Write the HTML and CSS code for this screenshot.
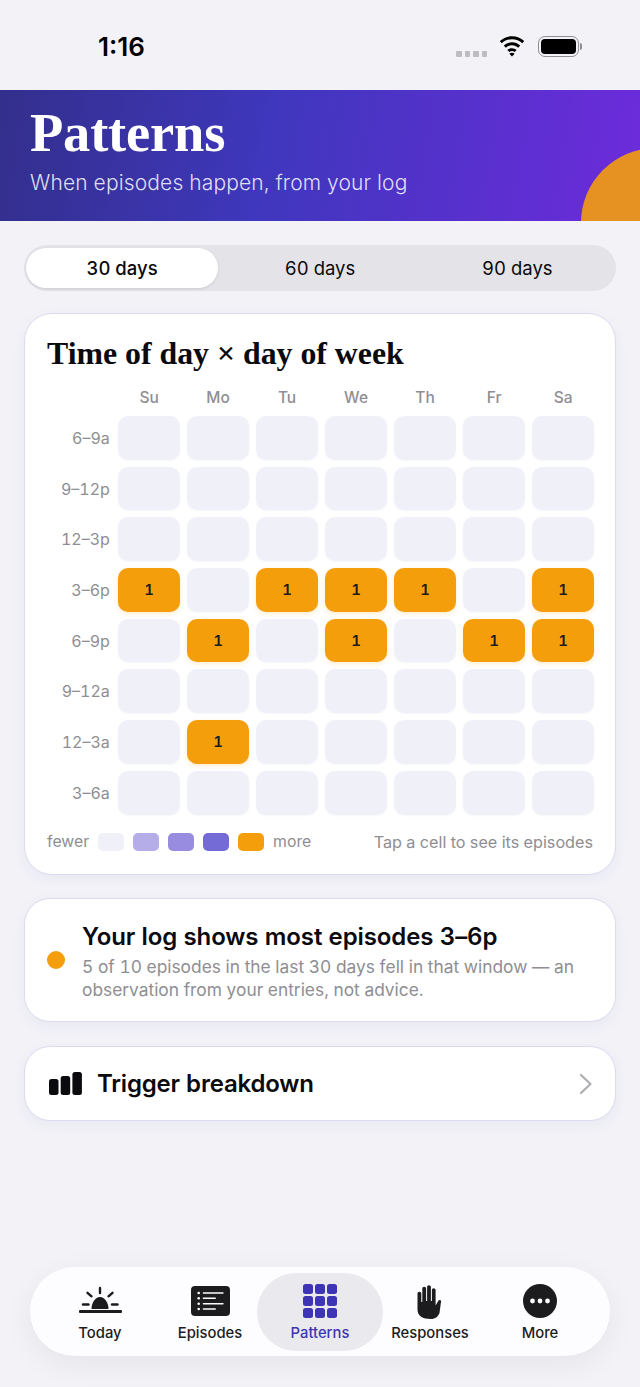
FILE: index.html
```html
<!DOCTYPE html>
<html lang="en">
<head>
<meta charset="utf-8">
<title>Patterns</title>
<link rel="stylesheet" href="styles.css">
</head>
<body>
<div class="page">
  <div class="status">
    <span class="time">1:16</span>
    <div class="status-icons">
      <div class="signal"><i></i><i></i><i></i><i></i></div>
      <svg class="wifi" viewBox="0 0 28 21"><path d="M14 3.2c4 0 7.6 1.5 10.3 4l1.9-2.1C22.9 2 18.700.3 14 .3S5.100 2 1.800 5.100l1.900 2.100c2.700-2.500 6.300-4 10.300-4z"/><path d="M14 9.300c2.400 0 4.600.9 6.200 2.400l2-2.100C20 7.500 17.100 6.300 14 6.300s-6 1.200-8.200 3.300l2 2.100c1.600-1.500 3.800-2.400 6.200-2.400z"/><path d="M14 15.100c1 0 2 .4 2.600 1l2-2.100c-1.200-1.100-2.900-1.800-4.600-1.800s-3.400.7-4.600 1.800l2 2.100c.6-.6 1.600-1 2.600-1z"/><path d="M14 20.500l2.600-2.800c-.6-.6-1.600-1-2.600-1s-2 .4-2.600 1z"/></svg>
      <div class="battery"><div class="battery-fill"></div></div>
      <div class="battery-cap"></div>
    </div>
  </div>

  <header class="hero">
    <h1>Patterns</h1>
    <p>When episodes happen, from your log</p>
    <div class="sun"></div>
  </header>

  <div class="segments">
    <div class="segment active">30 days</div>
    <div class="segment">60 days</div>
    <div class="segment">90 days</div>
  </div>

  <section class="card heat-card">
    <h2>Time of day × day of week</h2>
    <div class="grid">
      <span></span><span class="day">Su</span><span class="day">Mo</span><span class="day">Tu</span><span class="day">We</span><span class="day">Th</span><span class="day">Fr</span><span class="day">Sa</span>

      <span class="hour">6–9a</span><div class="c"></div><div class="c"></div><div class="c"></div><div class="c"></div><div class="c"></div><div class="c"></div><div class="c"></div>
      <span class="hour">9–12p</span><div class="c"></div><div class="c"></div><div class="c"></div><div class="c"></div><div class="c"></div><div class="c"></div><div class="c"></div>
      <span class="hour">12–3p</span><div class="c"></div><div class="c"></div><div class="c"></div><div class="c"></div><div class="c"></div><div class="c"></div><div class="c"></div>
      <span class="hour">3–6p</span><div class="c on">1</div><div class="c"></div><div class="c on">1</div><div class="c on">1</div><div class="c on">1</div><div class="c"></div><div class="c on">1</div>
      <span class="hour">6–9p</span><div class="c"></div><div class="c on">1</div><div class="c"></div><div class="c on">1</div><div class="c"></div><div class="c on">1</div><div class="c on">1</div>
      <span class="hour">9–12a</span><div class="c"></div><div class="c"></div><div class="c"></div><div class="c"></div><div class="c"></div><div class="c"></div><div class="c"></div>
      <span class="hour">12–3a</span><div class="c"></div><div class="c on">1</div><div class="c"></div><div class="c"></div><div class="c"></div><div class="c"></div><div class="c"></div>
      <span class="hour">3–6a</span><div class="c"></div><div class="c"></div><div class="c"></div><div class="c"></div><div class="c"></div><div class="c"></div><div class="c"></div>
    </div>
    <div class="legend">
      <span class="legend-text">fewer</span>
      <i class="swatch s0"></i><i class="swatch s1"></i><i class="swatch s2"></i><i class="swatch s3"></i><i class="swatch s4"></i>
      <span class="legend-text">more</span>
      <span class="legend-hint">Tap a cell to see its episodes</span>
    </div>
  </section>

  <section class="card insight">
    <div class="dot"></div>
    <div class="insight-body">
      <h3>Your log shows most episodes 3–6p</h3>
      <p>5 of 10 episodes in the last 30 days fell in that window — an observation from your entries, not advice.</p>
    </div>
  </section>

  <section class="card trigger">
    <svg class="bars" viewBox="0 0 33 23"><rect x="0" y="7" width="9.500" height="16" rx="2.500"/><rect x="11.700" y="4" width="9.500" height="19" rx="2.500"/><rect x="23.400" y="0" width="9.500" height="23" rx="2.500"/></svg>
    <span class="trigger-label">Trigger breakdown</span>
    <svg class="chev" viewBox="0 0 14 22"><path d="M2 2l9.500 9L2 20"/></svg>
  </section>

  <nav class="tabs">
    <div class="tab">
      <svg class="ico" viewBox="0 0 44 34"><rect x="1" y="26" width="43" height="3" rx="1"/><path d="M13.500 25c0-6 3.700-12 8.500-12s8.500 6 8.500 12z"/><g class="rays"><path d="M22 4v5"/><path d="M9.500 8.800l4 3.500"/><path d="M34.500 8.800l-4 3.500"/><path d="M5 20.500h5.500"/><path d="M34 20.500h5.500"/></g></svg>
      <span>Today</span>
    </div>
    <div class="tab">
      <svg class="ico" viewBox="0 0 44 34"><rect x="3" y="2" width="39" height="30" rx="4"/><g class="inv"><circle cx="10.700" cy="9" r="1.300"/><circle cx="10.700" cy="14.300" r="1.300"/><circle cx="10.700" cy="19.700" r="1.300"/><circle cx="10.700" cy="25" r="1.300"/><rect x="14.700" y="8.200" width="21" height="1.600" rx=".8"/><rect x="14.700" y="13.500" width="13.300" height="1.600" rx=".8"/><rect x="14.700" y="18.900" width="21" height="1.600" rx=".8"/><rect x="14.700" y="24.200" width="13.300" height="1.600" rx=".8"/></g></svg>
      <span>Episodes</span>
    </div>
    <div class="tab current">
      <svg class="ico" viewBox="-5 0 44 34"><rect x="0" y="0" width="10" height="10" rx="2.500"/><rect x="12" y="0" width="10" height="10" rx="2.500"/><rect x="24" y="0" width="10" height="10" rx="2.500"/><rect x="0" y="12" width="10" height="10" rx="2.500"/><rect x="12" y="12" width="10" height="10" rx="2.500"/><rect x="24" y="12" width="10" height="10" rx="2.500"/><rect x="0" y="24" width="10" height="10" rx="2.500"/><rect x="12" y="24" width="10" height="10" rx="2.500"/><rect x="24" y="24" width="10" height="10" rx="2.500"/></svg>
      <span>Patterns</span>
    </div>
    <div class="tab">
      <svg class="ico" viewBox="0 0 44 34"><path d="M9.500 9.500c0-1 .8-1.800 1.900-1.800s1.900.8 1.900 1.800V18h1V4.500c0-1.100.8-1.800 1.900-1.800s1.900.7 1.900 1.800V17h1V3c0-1.100.8-1.800 1.900-1.800s1.900.7 1.900 1.800v14h1V6c0-1.100.8-1.800 1.800-1.800s1.900.7 1.900 1.800v15.500l2.500-4.300c.6-1 1.500-1.400 2.300-1 .8.400 1 1.400.5 2.400L31.500 29c-1.500 3.700-4.200 6-8.500 6-8.500 0-13.500-3-13.500-9.500z"/></svg>
      <span>Responses</span>
    </div>
    <div class="tab">
      <svg class="ico" viewBox="-5 0 44 34"><circle cx="17" cy="17" r="17"/><g class="inv"><circle cx="9.500" cy="17" r="2.400"/><circle cx="17" cy="17" r="2.400"/><circle cx="24.500" cy="17" r="2.400"/></g></svg>
      <span>More</span>
    </div>
  </nav>
</div>
</body>
</html>
```
FILE: styles.css
```css
* { box-sizing: border-box; }
html, body { margin: 0; padding: 0; }
body { background: #f2f2f7; font-family: Inter, "Liberation Sans", sans-serif; color: #0a0a0f; font-variant-numeric: tabular-nums; }
.page { width: 640px; height: 1387px; display: flex; flex-direction: column; overflow: hidden; }

.status { height: 90px; flex: none; display: flex; align-items: flex-start; justify-content: space-between; padding: 31px 58px 0 98px; }
.time { font-size: 26px; line-height: 32px; font-weight: 600; color: #000; font-variant-numeric: normal; }
.status-icons { display: flex; align-items: center; height: 32px; }
.signal { display: flex; gap: 3px; margin-top: 14px; margin-right: 11px; }
.signal i { width: 5.500px; height: 5.500px; border-radius: 1px; background: #bdbdc2; display: block; }
.wifi { width: 28px; height: 21px; fill: #000; margin-right: 12px; margin-top: -2px; }
.battery { width: 41px; height: 21px; border: 1.500px solid #8e8e93; border-radius: 7px; padding: 2px; margin-top: -1px; }
.battery-fill { width: 100%; height: 100%; background: #000; border-radius: 4px; }
.battery-cap { width: 2px; height: 7px; background: #8e8e93; border-radius: 0 2px 2px 0; margin-left: 1px; margin-top: -1px; }

.hero { height: 131px; flex: none; position: relative; overflow: hidden; padding: 13px 30px 0; color: #fff; background: linear-gradient(100deg, #332f8c 0%, #3f37bd 42%, #6d2bdb 100%); }
.hero h1 { margin: 0; font-family: "Liberation Serif", serif; font-weight: 700; font-size: 54.500px; line-height: 60px; letter-spacing: -0.2px; }
.hero p { margin: 4px 0 0; font-size: 21px; line-height: 32px; font-weight: 300; color: rgba(255,255,255,.85); letter-spacing: 0.15px; }
.sun { position: absolute; left: 581px; top: 58px; width: 150px; height: 150px; border-radius: 50%; background: #e59223; }

.segments { flex: none; margin: 24px 24px 0; height: 46px; border-radius: 23px; background: #e3e3e8; padding: 3px 0; display: grid; grid-template-columns: repeat(3, 1fr); }
.segment { display: flex; align-items: center; justify-content: center; font-size: 18.500px; font-weight: 400; color: #0a0a0f; }
.segment.active { background: #fff; border-radius: 20px; margin: 0 3.300px 0 2px; box-shadow: 0 1px 3px rgba(0,0,0,.1); font-weight: 500; }

.card { flex: none; margin: 0 24px; background: #fff; border: 1px solid #dcdaf0; box-shadow: 0 4px 14px rgba(60,55,150,.05); }

.heat-card { margin-top: 22px; height: 562px; border-radius: 28px; padding: 21px 22px 0; }
.heat-card h2 { margin: 0; font-family: "Liberation Serif", serif; font-weight: 700; font-size: 31.800px; line-height: 38px; color: #0a0a0f; }

.grid { margin-top: 12px; display: grid; grid-template-columns: 63.800px repeat(7, 61.500px); grid-template-rows: 24px repeat(8, 43.700px); column-gap: 7.500px; row-gap: 7px; }
.day { font-size: 15.500px; font-weight: 500; color: #8e8e93; text-align: center; line-height: 24px; margin-top: 1px; }
.hour { font-size: 16px; color: #8e8e93; display: flex; align-items: center; justify-content: flex-end; margin-right: 1px; }
.c { border-radius: 10px; background: #f0f0f9; box-shadow: 0 1px 2px rgba(60,55,150,.04); display: flex; align-items: center; justify-content: center; font-size: 15px; font-weight: 600; color: #1c1c1e; }
.c.on { background: #f59e0b; box-shadow: 0 2px 5px rgba(245,158,11,.2); }

.legend { display: flex; align-items: center; margin-top: 18px; height: 18px; }
.legend-text { font-size: 15.800px; color: #8e8e93; }
.swatch { display: block; width: 26px; height: 18px; border-radius: 5px; margin-left: 9px; }
.s0 { background: #f0f0f9; }
.s1 { background: #b5ade8; }
.s2 { background: #978cdf; }
.s3 { background: #756bd6; }
.s4 { background: #f59e0b; margin-right: 9px; }
.legend-hint { margin-left: auto; font-size: 16.200px; color: #8e8e93; }

.insight { margin-top: 23px; height: 124px; border-radius: 26px; display: flex; align-items: center; padding: 3px 22px 0; gap: 17px; }
.dot { width: 18px; height: 18px; border-radius: 50%; background: #f59e0b; flex: none; margin-top: -3px; }
.insight h3 { margin: 0; font-size: 24px; line-height: 30px; font-weight: 600; color: #0a0a0f; letter-spacing: -0.1px; }
.insight p { margin: 3px 0 0; font-size: 17.350px; line-height: 23px; color: #8e8e93; }

.trigger { margin-top: 24px; height: 75px; border-radius: 26px; display: flex; align-items: center; padding: 0 22px 0 24px; }
.bars { width: 33px; height: 23px; fill: #0a0a0f; flex: none; }
.trigger-label { margin-left: 15px; font-size: 24px; font-weight: 600; letter-spacing: -0.2px; }
.chev { margin-left: auto; width: 14px; height: 22px; fill: none; stroke: #aeaeb2; stroke-width: 2.200; stroke-linecap: round; stroke-linejoin: round; }

.tabs { flex: none; margin: auto 30px 31px; height: 89px; border-radius: 45px; background: #fdfdff; box-shadow: 0 8px 30px rgba(0,0,0,.06); display: grid; grid-template-columns: repeat(5, 110px); padding: 6px 15px 5px; }
.tab { display: flex; flex-direction: column; align-items: center; justify-content: flex-end; padding-bottom: 8px; border-radius: 40px; font-size: 14.800px; font-weight: 450; color: #1c1c1e; }
.tab span { line-height: 20px; }
.tab.current { background: #e9e9ee; color: #3d35b5; margin: 0 -8px; }
.ico { fill: #1c1c1e; height: 34px; width: 44px; margin-bottom: 5px; overflow: visible; }
.current .ico { fill: #3d35b5; }
.inv { fill: #fdfdff; }
.rays { fill: none; stroke: #1c1c1e; stroke-width: 2.400; stroke-linecap: round; }
```
